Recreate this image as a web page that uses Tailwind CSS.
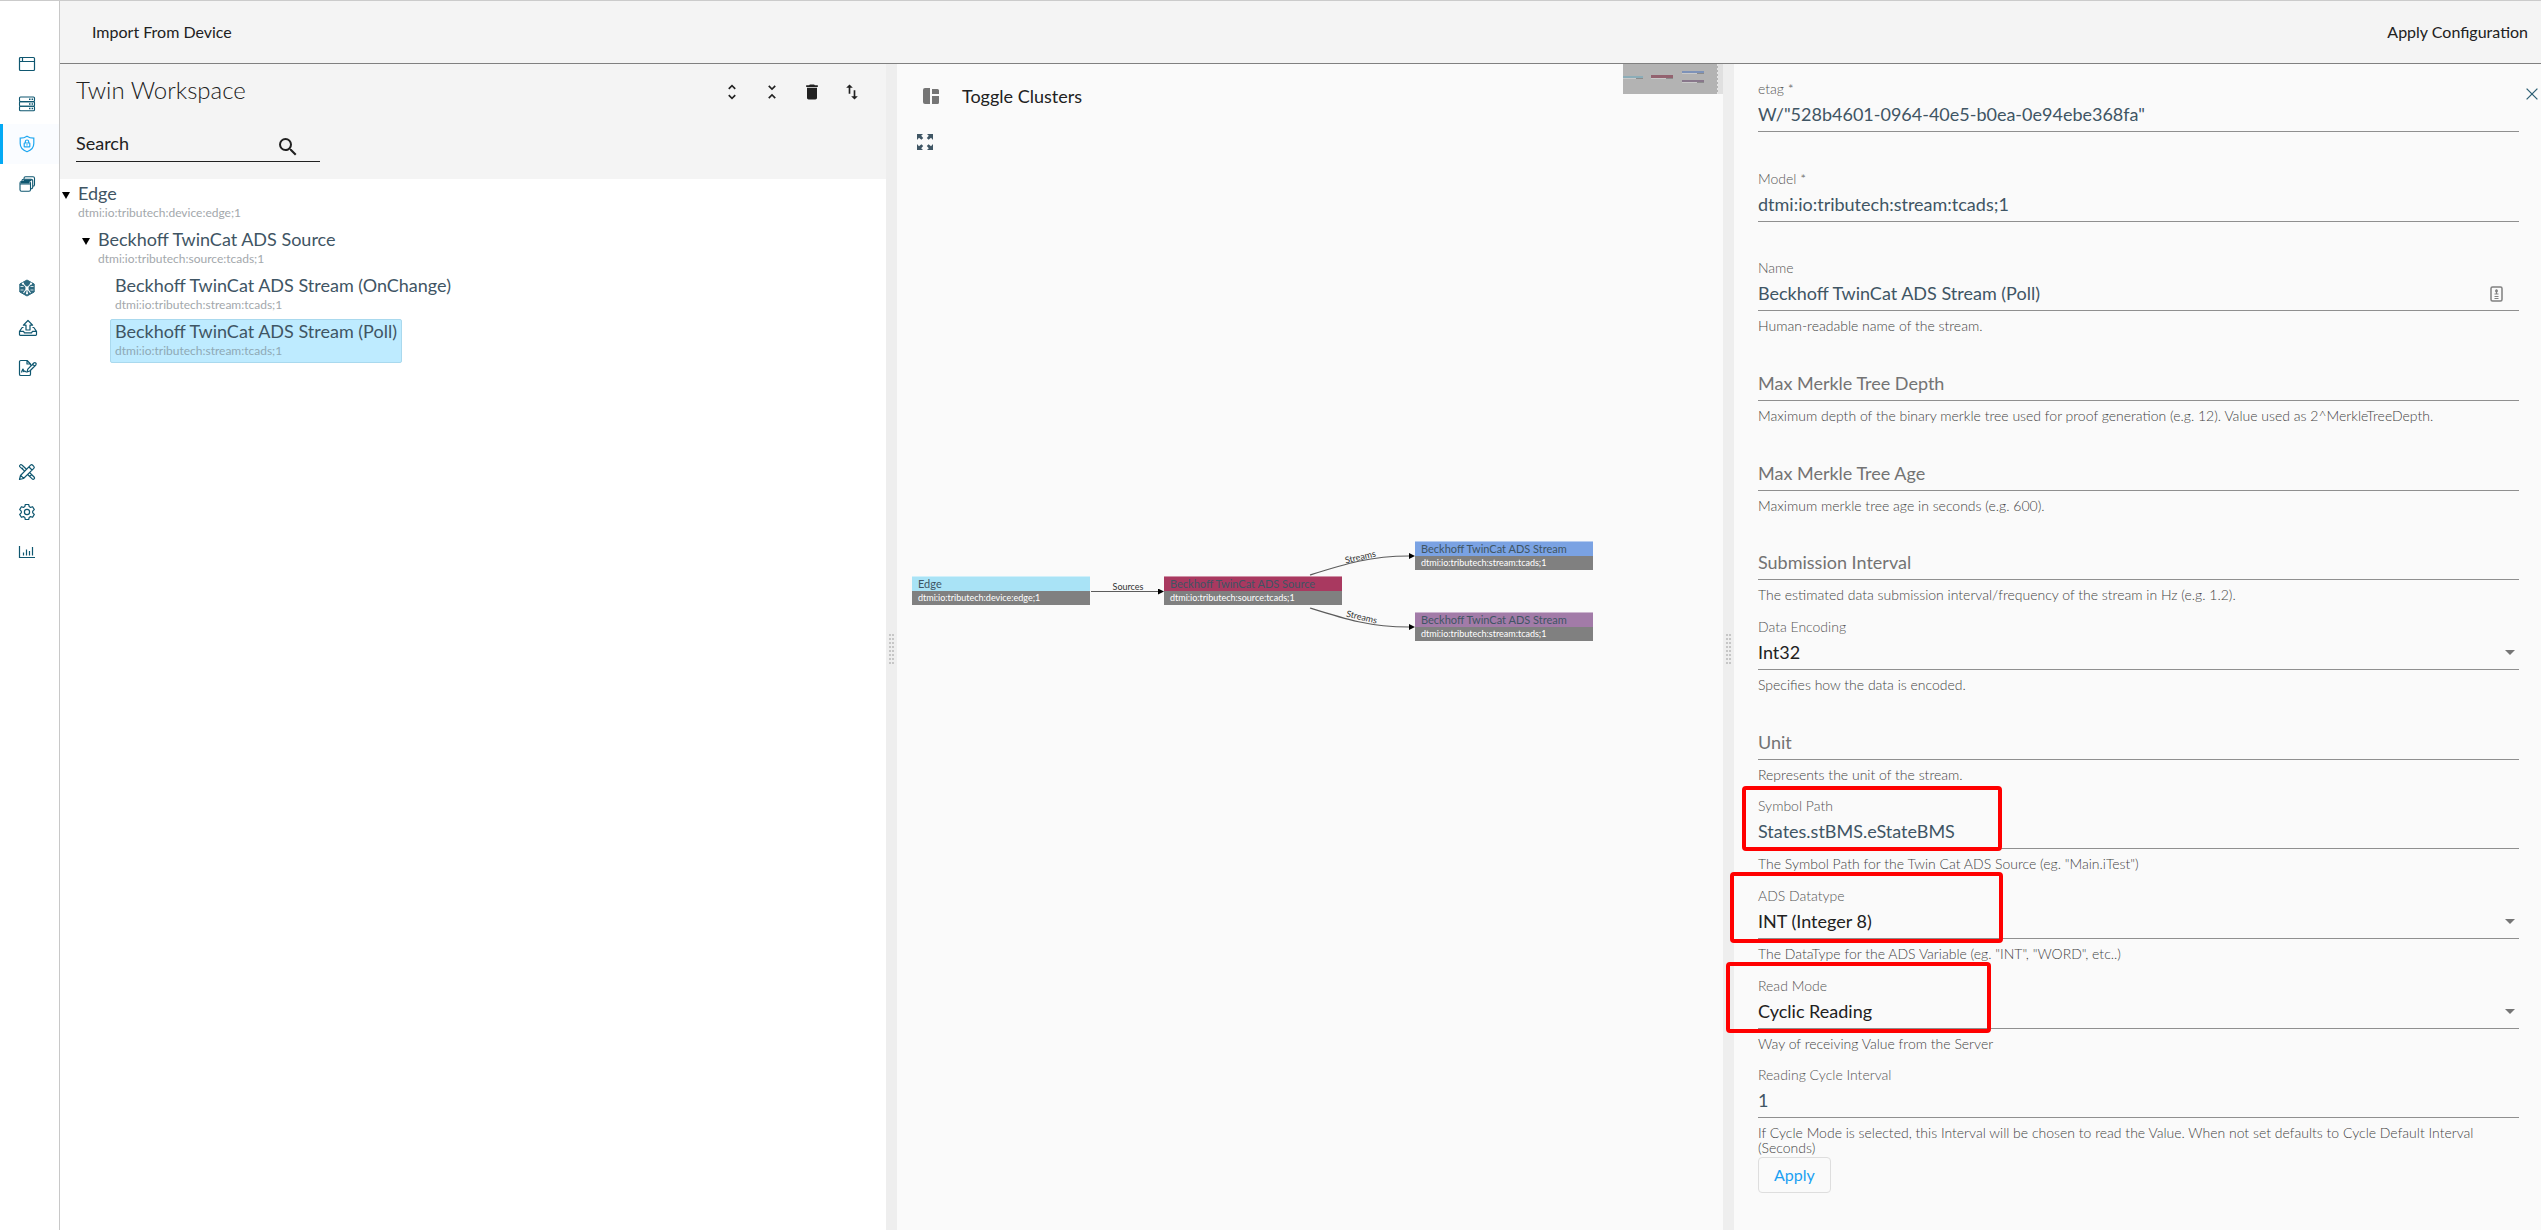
<!DOCTYPE html>
<html lang="en">
<head>
<meta charset="utf-8">
<title>Twin Workspace</title>
<script src="https://cdn.jsdelivr.net/npm/@tailwindcss/browser@4"></script>
</head>
<body class="flex min-h-screen border-t border-[#cbcbcb] bg-white font-['Lato',sans-serif] text-[18px] text-[#3f5564]">

<!-- Main navigation -->
<nav aria-label="Main" class="w-[60px] shrink-0 border-r border-[#c8c8c8] pt-[43px] text-[#0f5770]">
  <a href="#" aria-label="Overview" class="flex h-10 items-center pl-[18px]">
    <svg class="size-[18px]" viewBox="0 0 18 18" fill="none" stroke="currentColor" stroke-width="1.2"><rect x="1.5" y="2.5" width="15" height="13" rx="1"/><path d="M1.500 6.500h15M4.500 2.500v4"/></svg>
  </a>
  <a href="#" aria-label="Devices" class="flex h-10 items-center pl-[18px]">
    <svg class="size-[18px]" viewBox="0 0 18 18" fill="none" stroke="currentColor" stroke-width="1.1"><rect x="1.500" y="2" width="15" height="4.600" rx="1"/><rect x="1.500" y="6.600" width="15" height="4.600" rx="1"/><rect x="1.500" y="11.200" width="15" height="4.600" rx="1"/><path d="M11 4.300h1.500M13.600 4.300h1.500M11 8.900h1.500M13.600 8.900h1.500M11 13.500h1.500M13.600 13.500h1.500" stroke-width="1.500"/></svg>
  </a>
  <a href="#" aria-label="Twin workspace" aria-current="page" class="flex h-10 items-center border-l-3 border-[#03a9f4] bg-[#fafcff] pl-[15px] text-[#1ea7f0]">
    <svg class="size-[18px]" viewBox="0 0 18 18" fill="none" stroke="currentColor" stroke-width="1.200"><path d="M9 1.200C7 2.700 4.600 3.200 2.200 3.200v5.300c0 4 2.700 6.800 6.800 8.300 4.100-1.500 6.800-4.300 6.800-8.300V3.200C13.400 3.200 11 2.700 9 1.200z"/><rect x="6.200" y="8" width="5.600" height="3.900" rx=".5"/><path d="M7.300 8V6.700a1.700 1.700 0 0 1 3.400 0V8M9 9.300v1.300"/></svg>
  </a>
  <a href="#" aria-label="Collections" class="flex h-10 items-center pl-[18px]">
    <svg class="size-[18px]" viewBox="0 0 18 18" fill="none" stroke="currentColor" stroke-width="1.100"><rect x="2" y="6.500" width="10.500" height="9.800" rx="1.500"/><path d="M2 9h10.500M4 6.500V5.700A1.500 1.500 0 0 1 5.500 4.200h7.700a1.500 1.500 0 0 1 1.500 1.500v6.500a1.500 1.500 0 0 1-1.500 1.500h-.7M6 4.200V3.200a1.500 1.500 0 0 1 1.500-1.500H15a1.500 1.500 0 0 1 1.500 1.500v6.500a1.500 1.500 0 0 1-1.500 1.500h-.3"/><path d="M3 7.700h8.500M5.500 5.300h8" stroke-width="1.500"/></svg>
  </a>
  <a href="#" aria-label="Network" class="mt-16 flex h-10 items-center pl-[18px]">
    <svg class="size-[18px]" viewBox="0 0 18 18" fill="none"><path d="M9 1l7.200 4v8L9 17l-7.200-4V5z" fill="#2d6a80" stroke="#2d6a80" stroke-linejoin="round"/><path d="M9 9L5 4.500M9 9l4-4.500M9 9l-3.500 5M9 9l3.500 5M9 9v5" stroke="#fff" stroke-width="1.100"/><path d="M2.500 7.500h3M12.500 7.500h3M2.500 11h3M12.500 11h3" stroke="#fff" stroke-width=".8"/><circle cx="5" cy="4.700" r="1.100" fill="#fff"/><circle cx="13" cy="4.700" r="1.100" fill="#fff"/><circle cx="9" cy="9" r="1.700" fill="#fff"/><circle cx="9" cy="14.300" r="1.100" fill="#fff"/></svg>
  </a>
  <a href="#" aria-label="Upload" class="flex h-10 items-center pl-[18px]">
    <svg class="h-[18px] w-5" viewBox="0 0 20 18" fill="none" stroke="currentColor" stroke-width="1.200" stroke-linejoin="round"><path d="M8 11V6.200H5.400L10 1.500l4.600 4.700H12V11z"/><path d="M5.500 8.500H4.200L1.500 12.300v3.200a.8.800 0 0 0 .8.800h15.400a.8.800 0 0 0 .8-.8v-3.200l-2.700-3.800h-1.300M1.500 12.300h4l1 1.500h7l1-1.500h4"/></svg>
  </a>
  <a href="#" aria-label="Contracts" class="flex h-10 items-center pl-[18px]">
    <svg class="h-[18px] w-5" viewBox="0 0 20 18" fill="none" stroke="currentColor" stroke-width="1.200" stroke-linejoin="round"><path d="M12.500 11.500v3.700a1.300 1.300 0 0 1-1.300 1.300H2.800a1.300 1.300 0 0 1-1.300-1.300V2.800a1.300 1.300 0 0 1 1.300-1.300h6.300L12.500 5v1.500M9 1.500V5h3.500"/><path d="M3.500 13.500c1-3.500 1.700-4 1.800-2.600 0 1.500.3 2.300 1 1.300.7-.9 1 .8 1.800.8h1l.7-2.800 6-6.200c1.300-1.200 3.200.6 2 2l-6 6-2.700 1M14.600 5.200l2 2"/></svg>
  </a>
  <a href="#" aria-label="Design tools" class="mt-16 flex h-10 items-center pl-[18px]">
    <svg class="size-[18px]" viewBox="0 0 18 18" fill="none" stroke="currentColor" stroke-width="1.200" stroke-linejoin="round"><path d="M1.500 16.500l1-4L12.600 2.200a1.500 1.500 0 0 1 2.100 0l1.100 1.100a1.500 1.500 0 0 1 0 2.100L5.500 15.500zM11 4l3 3M2.700 12.300l3 3"/><path d="M6.600 8L2 3.900c-.6-.6-.6-1.200 0-1.800.6-.7 1.200-.8 1.900-.1L8.500 6.200M4 5.800l1-1M11.500 9.500l4.600 4.500c.6.600.6 1.300 0 1.900-.6.700-1.300.7-1.900 0L9.600 11.500M11.800 13.500l1-1M13.700 11.700l-1 1"/></svg>
  </a>
  <a href="#" aria-label="Settings" class="flex h-10 items-center pl-[18px]">
    <svg class="size-[18px]" viewBox="0 0 18 18" fill="none" stroke="currentColor" stroke-width="1.200" stroke-linejoin="round"><path d="M7.300 1.500h3.400l.5 2.100 1.300.8 2.100-.7 1.700 2.900-1.600 1.600v1.600l1.600 1.600-1.700 2.900-2.100-.7-1.300.8-.5 2.100H7.300l-.5-2.100-1.300-.8-2.100.7-1.700-2.900 1.600-1.600V8.200L1.700 6.600l1.700-2.900 2.100.7 1.300-.8z"/><circle cx="9" cy="9" r="2.600"/></svg>
  </a>
  <a href="#" aria-label="Statistics" class="flex h-10 items-center pl-[18px]">
    <svg class="size-[18px]" viewBox="0 0 18 18" fill="none" stroke="currentColor" stroke-width="1.200"><path d="M1.500 3v11.500h15.500M5.500 12.500V9.500M8.500 12.500V6.500M11.500 12.500V8M14.500 12.500V4"/></svg>
  </a>
</nav>

<div class="flex min-w-0 flex-1 flex-col">
  <header class="flex h-[63px] shrink-0 items-center justify-between border-b border-[#808080] bg-[#f4f4f4] pr-[13px] pl-8 text-base text-[#212121]">
    <button type="button">Import From Device</button>
    <button type="button">Apply Configuration</button>
  </header>

  <main class="grid flex-1 grid-cols-[826fr_11px_826fr_11px_807fr]">
    <!-- Tree of twins -->
    <section class="min-w-0">
      <div class="h-[115px] bg-[#f4f4f4] px-4 pt-3">
        <div class="flex h-8 items-center justify-between pr-2 text-[#212121]">
          <h1 class="pb-1 text-2xl font-light">Twin Workspace</h1>
          <div class="flex gap-5">
            <button type="button" aria-label="Expand all"><svg class="size-5" viewBox="0 0 24 24" fill="currentColor"><path d="M12 5.830L15.170 9l1.410-1.410L12 3 7.410 7.590 8.830 9 12 5.830zm0 12.340L8.830 15l-1.410 1.410L12 21l4.590-4.590L15.170 15 12 18.170z"/></svg></button>
            <button type="button" aria-label="Collapse all"><svg class="size-5" viewBox="0 0 24 24" fill="currentColor"><path d="M7.410 18.590L8.830 20 12 16.830 15.170 20l1.410-1.410L12 14l-4.590 4.590zm9.180-13.180L15.170 4 12 7.170 8.830 4 7.410 5.410 12 10l4.590-4.590z"/></svg></button>
            <button type="button" aria-label="Delete"><svg class="size-5" viewBox="0 0 24 24" fill="currentColor"><path d="M6 19c0 1.100.9 2 2 2h8c1.100 0 2-.9 2-2V7H6v12zM19 4h-3.500l-1-1h-5l-1 1H5v2h14V4z"/></svg></button>
            <button type="button" aria-label="Sort"><svg class="size-5" viewBox="0 0 24 24" fill="currentColor"><path d="M16 17.010V10h-2v7.010h-3L15 21l4-3.990h-3zM9 3L5 6.990h3V14h2V6.990h3L9 3z"/></svg></button>
          </div>
        </div>
        <div class="mt-6 flex h-[30px] w-[244px] items-center border-b border-[#212121] pr-5 pb-1.5 text-[#212121]">
          <input type="search" aria-label="Search" placeholder="Search" class="h-6 min-w-0 flex-1 outline-none placeholder:text-[#212121]">
          <svg class="mt-1.5 size-6" viewBox="0 0 24 24" fill="currentColor"><path d="M15.500 14h-.79l-.28-.27A6.471 6.471 0 0 0 16 9.500 6.500 6.500 0 1 0 9.500 16c1.610 0 3.090-.59 4.230-1.570l.27.28v.79l5 4.990L20.490 19l-4.990-5zm-6 0C7.010 14 5 11.990 5 9.500S7.010 5 9.500 5 14 7.010 14 9.500 11.990 14 9.500 14z"/></svg>
        </div>
      </div>

      <ul class="flex flex-col items-start gap-0.5 pt-0.5">
        <li class="flex">
          <button type="button" aria-label="Collapse Edge" class="flex h-7 w-[13px] items-center pl-0.5 text-black"><svg class="h-[7px] w-2" viewBox="0 0 8 7" fill="currentColor"><path d="M0 0h8L4 7z"/></svg></button>
          <div class="h-11 border border-transparent px-1"><p class="leading-[23px]">Edge</p><p class="text-xs leading-4 text-[#a3a8ac]">dtmi:io:tributech:device:edge;1</p></div>
        </li>
        <li class="flex pl-5">
          <button type="button" aria-label="Collapse Beckhoff TwinCat ADS Source" class="flex h-7 w-[13px] items-center pl-0.5 text-black"><svg class="h-[7px] w-2" viewBox="0 0 8 7" fill="currentColor"><path d="M0 0h8L4 7z"/></svg></button>
          <div class="h-11 border border-transparent px-1"><p class="leading-[23px]">Beckhoff TwinCat ADS Source</p><p class="text-xs leading-4 text-[#a3a8ac]">dtmi:io:tributech:source:tcads;1</p></div>
        </li>
        <li class="pl-[50px]">
          <div class="h-11 border border-transparent px-1"><p class="leading-[23px]">Beckhoff TwinCat ADS Stream (OnChange)</p><p class="text-xs leading-4 text-[#a3a8ac]">dtmi:io:tributech:stream:tcads;1</p></div>
        </li>
        <li class="pl-[50px]">
          <div class="h-11 rounded-xs border border-[#a9d9ee] bg-[#beebff] px-1"><p class="leading-[23px]">Beckhoff TwinCat ADS Stream (Poll)</p><p class="text-xs leading-4 text-[#8fa9b5]">dtmi:io:tributech:stream:tcads;1</p></div>
        </li>
      </ul>
    </section>

    <div role="separator" class="flex items-center justify-center bg-[#eeeeee] pt-1 text-[#c6c6c6]">
      <svg class="h-[30px] w-[5px]" viewBox="0 0 5 30" stroke="currentColor" stroke-width="2" stroke-dasharray="2 2"><path d="M1 0v30M4 0v30"/></svg>
    </div>

    <!-- Graph -->
    <section class="relative min-w-0 bg-[#fafafa]">
      <svg class="absolute inset-0 size-full font-['Lato',sans-serif]" role="img" aria-label="Twin graph">
        <defs><marker id="arrow" viewBox="0 0 6 6" refX="0" refY="3" markerWidth="6" markerHeight="6" markerUnits="userSpaceOnUse" orient="auto"><path d="M0 0l6 3-6 3z" fill="#000"/></marker></defs>
        <g fill="none" stroke="#5c5c5c" stroke-width="1.200">
          <path d="M194 527.500H261" marker-end="url(#arrow)"/>
          <path d="M413 511C448 500 473 492 512 492" marker-end="url(#arrow)"/>
          <path d="M413 544C448 555 473 563 512 563" marker-end="url(#arrow)"/>
        </g>
        <g font-size="9" fill="#333" text-anchor="middle">
          <text x="231" y="526">Sources</text>
          <text transform="translate(464 496) rotate(-13)">Streams</text>
          <text transform="translate(464 556) rotate(13)">Streams</text>
        </g>
        <g stroke="none">
          <rect x="15" y="512" width="178" height="15" fill="#a9e3f6"/><rect x="15" y="527" width="178" height="14" fill="#808080"/>
          <rect x="267" y="512" width="178" height="15" fill="#a93960"/><rect x="267" y="527" width="178" height="14" fill="#808080"/>
          <rect x="518" y="477" width="178" height="15" fill="#7aa2e3"/><rect x="518" y="492" width="178" height="14" fill="#808080"/>
          <rect x="518" y="548" width="178" height="15" fill="#a27ba8"/><rect x="518" y="563" width="178" height="14" fill="#808080"/>
        </g>
        <g fill="none" stroke="#fff" stroke-opacity=".45">
          <path d="M15 512.500h178M267 512.500h178M518 477.500h178M518 548.500h178"/>
        </g>
        <g font-size="11" fill="#3f5564">
          <text x="21" y="524">Edge</text><text x="273" y="524">Beckhoff TwinCat ADS Source</text>
          <text x="524" y="489">Beckhoff TwinCat ADS Stream</text><text x="524" y="560">Beckhoff TwinCat ADS Stream</text>
        </g>
        <g font-size="9" fill="#fff">
          <text x="21" y="537">dtmi:io:tributech:device:edge;1</text><text x="273" y="537">dtmi:io:tributech:source:tcads;1</text>
          <text x="524" y="502">dtmi:io:tributech:stream:tcads;1</text><text x="524" y="573">dtmi:io:tributech:stream:tcads;1</text>
        </g>
      </svg>
      <div class="relative flex flex-col items-start pt-[18px] pl-5">
        <button type="button" class="flex h-7 items-center gap-[23px] pl-1.5 text-[#212121]">
          <svg class="size-4 text-[#757575]" viewBox="0 0 16 16" fill="currentColor"><path d="M7 0v16H2a2 2 0 0 1-2-2V2a2 2 0 0 1 2-2zM9 1h5.500A1.500 1.500 0 0 1 16 2.500V6H9zM9 8h7v6.500a1.500 1.500 0 0 1-1.500 1.500H9z"/></svg>
          Toggle Clusters
        </button>
        <button type="button" aria-label="Fit to screen" class="mt-6">
          <svg class="size-4" viewBox="0 0 16 16" fill="currentColor"><path d="M0 0h6L4.200 1.800 6.200 4 4.400 5.800 2 3.800 0 6zM16 0v6l-2-2.200-2.400 2L9.800 4l2-2.200L10 0zM0 16v-6l2 2.200 2.400-2L6.200 12l-2 2.200L6 16zM16 16h-6l1.800-1.800-2-2.200 1.800-1.800 2.400 2L16 10z"/></svg>
        </button>
      </div>
      <!-- Minimap -->
      <div class="absolute top-0 right-0 h-[30px] w-[100px] border-r-5 border-[#e0e0e0] bg-[#b3b3b3]">
        <svg class="h-[30px] w-[95px]" viewBox="0 0 95 30"><path d="M0 12h20v2H0z" fill="#8cadb8"/><path d="M28 11h22v3H28z" fill="#93626f"/><path d="M59 7h22v2H59z" fill="#7d92b8"/><path d="M59 16h22v2H59z" fill="#88778b"/><path d="M0 14.500h20M28 14.500h22M59 9.500h22M59 18.500h22" stroke="#c9c9c9"/><path d="M13 14.500h7M43 14.500h7M74 9.500h7M74 18.500h7" stroke="#8c8c8c"/><path d="M94.500 0v30" stroke="#e6e6e6" stroke-dasharray="2 2"/></svg>
      </div>
    </section>

    <div role="separator" class="flex items-center justify-center bg-[#eeeeee] pt-1 text-[#c6c6c6]">
      <svg class="h-[30px] w-[5px]" viewBox="0 0 5 30" stroke="currentColor" stroke-width="2" stroke-dasharray="2 2"><path d="M1 0v30M4 0v30"/></svg>
    </div>

    <!-- Properties of the selected twin -->
    <section class="relative min-w-0 bg-[#fafafa] pt-[15px] pr-[22px] pl-6">
      <button type="button" aria-label="Close" class="absolute top-6 right-[3px] text-[#2f6075]"><svg class="size-3" viewBox="0 0 12 12" fill="none" stroke="currentColor" stroke-width="1.300"><path d="M.6.6l10.800 10.800M11.400.6L.6 11.400"/></svg></button>
      <form>
        <div class="grid h-[1076px] auto-rows-fr">
          <div>
            <label for="etag" class="block h-5 text-sm font-light text-[#555555]">etag *</label>
            <input id="etag" value='W/"528b4601-0964-40e5-b0ea-0e94ebe368fa"' class="block h-[33px] w-full border-b border-[#8f8f8f] pb-0.5 outline-none">
          </div>
          <div>
            <label for="model" class="block h-5 text-sm font-light text-[#555555]">Model *</label>
            <input id="model" value="dtmi:io:tributech:stream:tcads;1" class="block h-[33px] w-full border-b border-[#8f8f8f] pb-0.5 outline-none">
          </div>
          <div>
            <label for="name" class="block h-5 text-sm font-light text-[#555555]">Name</label>
            <div class="flex h-[33px] items-center border-b border-[#8f8f8f] pr-4">
              <input id="name" value="Beckhoff TwinCat ADS Stream (Poll)" class="h-8 min-w-0 flex-1 pb-0.5 outline-none">
              <svg class="h-4 w-[13px]" viewBox="0 0 13 16" fill="none" stroke="#808080" stroke-width="1.500"><rect x="1" y="1" width="11" height="14" rx="1.500"/><path d="M6.500 3.500v4M4.500 8h4M4.500 10.500h4M4.500 12.500h4" stroke-width="1.200"/><circle cx="6.500" cy="5" r=".7"/></svg>
            </div>
            <p class="pt-[7px] text-sm leading-[15px] font-light text-[#444444]">Human-readable name of the stream.</p>
          </div>
          <div class="relative pt-5">
            <label for="depth" class="absolute leading-[30px] text-[#737373]">Max Merkle Tree Depth</label>
            <input id="depth" class="block h-[33px] w-full border-b border-[#8f8f8f] pb-0.5 outline-none">
            <p class="pt-[7px] text-sm leading-[15px] font-light text-[#444444]">Maximum depth of the binary merkle tree used for proof generation (e.g. 12). Value used as 2^MerkleTreeDepth.</p>
          </div>
          <div class="relative pt-5">
            <label for="age" class="absolute leading-[30px] text-[#737373]">Max Merkle Tree Age</label>
            <input id="age" class="block h-[33px] w-full border-b border-[#8f8f8f] pb-0.5 outline-none">
            <p class="pt-[7px] text-sm leading-[15px] font-light text-[#444444]">Maximum merkle tree age in seconds (e.g. 600).</p>
          </div>
          <div class="relative pt-5">
            <label for="interval" class="absolute leading-[30px] text-[#737373]">Submission Interval</label>
            <input id="interval" class="block h-[33px] w-full border-b border-[#8f8f8f] pb-0.5 outline-none">
            <p class="pt-[7px] text-sm leading-[15px] font-light text-[#444444]">The estimated data submission interval/frequency of the stream in Hz (e.g. 1.2).</p>
          </div>
          <div>
            <label for="encoding" class="block h-5 text-sm font-light text-[#555555]">Data Encoding</label>
            <div class="flex h-[33px] items-center border-b border-[#8f8f8f] pr-1">
              <select id="encoding" class="h-8 min-w-0 flex-1 appearance-none text-[#212121] outline-none"><option>Int32</option></select>
              <svg class="h-[5px] w-2.5" viewBox="0 0 10 5" fill="#757575"><path d="M0 0h10L5 5z"/></svg>
            </div>
            <p class="pt-[7px] text-sm leading-[15px] font-light text-[#444444]">Specifies how the data is encoded.</p>
          </div>
          <div class="relative pt-5">
            <label for="unit" class="absolute leading-[30px] text-[#737373]">Unit</label>
            <input id="unit" class="block h-[33px] w-full border-b border-[#8f8f8f] pb-0.5 outline-none">
            <p class="pt-[7px] text-sm leading-[15px] font-light text-[#444444]">Represents the unit of the stream.</p>
          </div>
          <div class="relative">
            <label for="symbol" class="block h-5 text-sm font-light text-[#555555]">Symbol Path</label>
            <input id="symbol" value="States.stBMS.eStateBMS" class="block h-[33px] w-full border-b border-[#8f8f8f] pb-0.5 outline-none">
            <p class="pt-[7px] text-sm leading-[15px] font-light text-[#444444]">The Symbol Path for the Twin Cat ADS Source (eg. "Main.iTest")</p>
            <div class="pointer-events-none absolute -top-2.5 -left-4 h-[65px] w-[260px] rounded-sm border-4 border-[#ff0000]"></div>
          </div>
          <div class="relative">
            <label for="datatype" class="block h-5 text-sm font-light text-[#555555]">ADS Datatype</label>
            <div class="flex h-[33px] items-center border-b border-[#8f8f8f] pr-1">
              <select id="datatype" class="h-8 min-w-0 flex-1 appearance-none text-[#212121] outline-none"><option>INT (Integer 8)</option></select>
              <svg class="h-[5px] w-2.5" viewBox="0 0 10 5" fill="#757575"><path d="M0 0h10L5 5z"/></svg>
            </div>
            <p class="pt-[7px] text-sm leading-[15px] font-light text-[#444444]">The DataType for the ADS Variable (eg. "INT", "WORD", etc..)</p>
            <div class="pointer-events-none absolute -top-3.5 -left-7 h-[71px] w-[273px] rounded-sm border-4 border-[#ff0000]"></div>
          </div>
          <div class="relative">
            <label for="mode" class="block h-5 text-sm font-light text-[#555555]">Read Mode</label>
            <div class="flex h-[33px] items-center border-b border-[#8f8f8f] pr-1">
              <select id="mode" class="h-8 min-w-0 flex-1 appearance-none text-[#212121] outline-none"><option>Cyclic Reading</option></select>
              <svg class="h-[5px] w-2.5" viewBox="0 0 10 5" fill="#757575"><path d="M0 0h10L5 5z"/></svg>
            </div>
            <p class="pt-[7px] text-sm leading-[15px] font-light text-[#444444]">Way of receiving Value from the Server</p>
            <div class="pointer-events-none absolute -top-3.5 -left-8 h-[71px] w-[265px] rounded-sm border-4 border-[#ff0000]"></div>
          </div>
          <div>
            <label for="cycle" class="block h-5 text-sm font-light text-[#555555]">Reading Cycle Interval</label>
            <input id="cycle" value="1" class="block h-[33px] w-full border-b border-[#8f8f8f] pb-0.5 outline-none">
            <p class="pt-[7px] text-sm leading-[15px] font-light text-[#444444]">If Cycle Mode is selected, this Interval will be chosen to read the Value. When not set defaults to Cycle Default Interval (Seconds)</p>
          </div>
        </div>
        <button type="submit" class="mt-0.5 h-9 rounded-sm border border-[#dedede] px-[15px] text-base text-[#1ba1f2]">Apply</button>
      </form>
    </section>
  </main>
</div>
</body>
</html>
